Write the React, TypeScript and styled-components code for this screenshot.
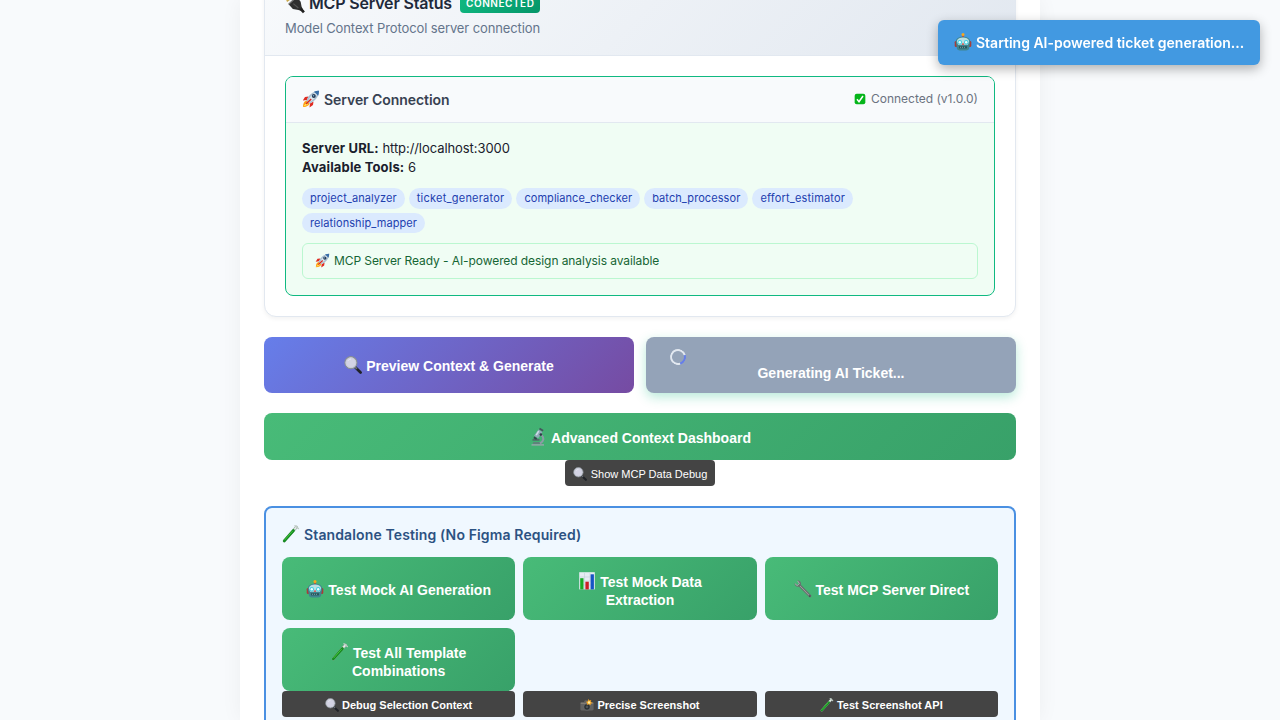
import React from "react";
import styled, { createGlobalStyle, css } from "styled-components";

const GlobalStyle = createGlobalStyle`
  * { box-sizing: border-box; }
  body {
    margin: 0;
    background: #f8fafc;
    color: #1a202c;
    font-family: Inter, "Liberation Sans", sans-serif;
    overflow: hidden;
  }
`;

const Page = styled.main`
  width: 800px;
  height: 720px;
  margin: 0 auto;
  padding: 0 24px;
  overflow: hidden;
  background: #ffffff;
  box-shadow: 0 0 20px rgba(0, 0, 0, 0.05);
`;

const Card = styled.section`
  margin-top: -30px;
  height: 347px;
  border: 1px solid #e2e8f0;
  border-radius: 12px;
  overflow: hidden;
  background: #fff;
  box-shadow: 0 2px 4px rgba(0, 0, 0, 0.05);
`;

const CardHeader = styled.header`
  height: 85px;
  padding: 19px 20px;
  background: linear-gradient(135deg, #f8fafc 0%, #e2e8f0 100%);
  border-bottom: 1px solid #e2e8f0;
`;

const CardTitle = styled.h3`
  display: flex;
  align-items: center;
  height: 26px;
  margin: 0;
  font-size: 16px;
  font-weight: 600;
  letter-spacing: -0.17px;
  color: #1e293b;

  svg { margin-top: 0; }
`;

const StatusBadge = styled.span`
  height: 18px;
  margin: 2px 0 0 8px;
  padding: 0 5.5px 0 6px;
  border-radius: 4px;
  background: linear-gradient(135deg, #10b981 0%, #059669 100%);
  color: #fff;
  font-size: 10px;
  line-height: 17px;
  font-weight: 600;
  letter-spacing: 0.55px;
`;

const CardSubtitle = styled.p`
  margin: 2px 0 0;
  font-size: 13px;
  line-height: 20px;
  letter-spacing: -0.11px;
  color: #64748b;
`;

const CardBody = styled.div`
  padding: 20px;
`;

const Connection = styled.div`
  height: 220px;
  border: 1px solid #10b981;
  border-radius: 8px;
  overflow: hidden;
  background: #f0fdf4;
`;

const ConnectionHeader = styled.div`
  display: flex;
  justify-content: space-between;
  height: 46px;
  padding: 0 16px;
  background: #f8fafc;
  border-bottom: 1px solid #e2e8f0;
`;

const ConnectionTitle = styled.h4`
  margin: 0;
  font-size: 14px;
  line-height: 46px;
  font-weight: 600;
  letter-spacing: -0.06px;
  color: #374151;
`;

const ConnectionState = styled.span`
  font-size: 12px;
  line-height: 44px;
  color: #6b7280;
`;

const ConnectionBody = styled.div`
  padding: 16px;
  font-size: 13px;
  line-height: 19.5px;
`;

const Detail = styled.div`
  height: 19px;
  line-height: 19px;
  letter-spacing: -0.07px;
`;

const DetailLabel = styled.strong`
  font-weight: 700;
  letter-spacing: 0.15px;
`;

const ToolList = styled.div`
  display: flex;
  flex-wrap: wrap;
  gap: 4px;
  margin: 11px 0 10px;
`;

const Tool = styled.span<{ $tracking: number }>`
  height: 20.5px;
  padding: 2px 8px;
  border-radius: 12px;
  background: #dbeafe;
  color: #1e40af;
  font-size: 11px;
  line-height: 16px;
  letter-spacing: ${(p) => p.$tracking}px;
`;

const Ready = styled.div`
  height: 36px;
  padding: 8px 12px;
  border: 1px solid #bbf7d0;
  border-radius: 6px;
  color: #166534;
  font-size: 12px;
  line-height: 18px;
  letter-spacing: -0.08px;
`;

const ActionRow = styled.div`
  display: grid;
  grid-template-columns: 1fr 1fr;
  gap: 12px;
  margin: 20px 0;
`;

const buttonText = css`
  border: 0;
  color: #fff;
  font-family: "Liberation Sans", Arial, sans-serif;
  text-align: center;
`;

const ActionButton = styled.button<{ $tone: "violet" | "green" | "busy"; $height: number; $top?: number }>`
  ${buttonText}
  width: 100%;
  height: ${(p) => p.$height}px;
  padding: ${(p) => p.$top ?? 2}px 24px 0;
  border-radius: 8px;
  font-size: 14px;
  line-height: 18px;
  font-weight: 700;
  background: ${(p) =>
    p.$tone === "violet"
      ? "linear-gradient(135deg, #667eea 0%, #764ba2 100%)"
      : p.$tone === "green"
        ? "linear-gradient(135deg, #48bb78 0%, #38a169 100%)"
        : "#94a3b8"};
  ${(p) => p.$tone === "busy" && "box-shadow: 0 4px 12px rgba(16, 185, 129, 0.3);"}
`;

const Spinner = styled.span`
  display: block;
  width: 16px;
  height: 16px;
  border: 2px solid #e2e8f0;
  border-top-color: #667eea;
  border-radius: 50%;
  transform: rotate(118deg);
`;

const BusyLabel = styled.span`
  display: block;
  line-height: 16px;
`;

const DebugButton = styled.button<{ $strong?: boolean }>`
  ${buttonText}
  height: 26px;
  padding: 2px 8px 0;
  border-radius: 4px;
  background: #444;
  font-size: 11px;
  line-height: 14px;
  font-weight: ${(p) => (p.$strong ? 700 : 400)};
`;

const Centered = styled.div`
  display: flex;
  justify-content: center;
`;

const Testing = styled.section`
  height: 260px;
  margin-top: 20px;
  padding: 16px;
  border: 2px solid #4a90e2;
  border-radius: 8px;
  background: #f0f8ff;
`;

const TestingTitle = styled.h4`
  height: 33px;
  margin: 0;
  font-size: 14px;
  line-height: 22px;
  font-weight: 600;
  letter-spacing: 0.13px;
  color: #2c5282;
`;

const TripleGrid = styled.div`
  display: grid;
  grid-template-columns: repeat(3, 1fr);
  gap: 8px;
`;

const Toast = styled.div`
  position: fixed;
  top: 20px;
  right: 20px;
  width: 322px;
  height: 45px;
  padding: 0 16px;
  border-radius: 6px;
  background: #4299e1;
  color: #fff;
  font-size: 14px;
  line-height: 46px;
  font-weight: 600;
  white-space: nowrap;
  box-shadow: 0 4px 12px rgba(0, 0, 0, 0.3);
`;

const Glyph = styled.svg<{ $size: number; $drop: number; $gap: number }>`
  display: inline-block;
  width: ${(p) => p.$size}px;
  height: ${(p) => p.$size}px;
  margin: -6px ${(p) => p.$gap}px 0 0;
  vertical-align: ${(p) => -p.$drop}px;
  overflow: visible;
  flex: none;
`;

type IconName =
  | "plug" | "rocket" | "check" | "robot" | "lens" | "microscope"
  | "tube" | "chart" | "wrench" | "camera";

const drawings: Record<IconName, React.ReactNode> = {
  plug: (
    <>
      <path d="M1.500 7.500l4-3M6 2l3.500-2" stroke="#c9a94e" strokeWidth="1.600" />
      <path d="M3.200 10.200L10.500 3.500l3.600 4.300.8 4.300 2.400 4.900-5.200-1.800-5-.7z" fill="#303030" />
      <path d="M3.200 10.200L10.500 3.500" stroke="#777" strokeWidth="1.200" />
      <path d="M7.500 9.500l4.500 4" stroke="#565656" strokeWidth="1" />
      <path d="M14 14l3 3.400" stroke="#202020" strokeWidth="2.400" />
    </>
  ),
  rocket: (
    <>
      <path d="M1 17c0-4 1.500-6.500 4.500-6.500l2.200 2.300C7.500 15.500 5 17 1 17z" fill="#ff9d16" />
      <path d="M1.200 16.800l3.500-4.300 1.700 1.700z" fill="#ffed5c" />
      <path d="M6.500 6.500L3 7 .8 10.600l4-.6zM11.500 11.500l-.5 3.400-3.500 2.500.5-4z" fill="#df2b22" />
      <path d="M4.500 11C6 5.500 10.500 1.200 17 .8c.2 6.200-4.500 11-9.800 12.700z" fill="#a9bfd2" />
      <path d="M5.600 12C8 6 11.500 3 16.900.8 15 6 11.500 10 6.500 12.800z" fill="#dae6ed" />
      <path d="M12 1.800C13.500 1 15.200.8 17 .8c0 1.800-.2 3.400-.9 4.900z" fill="#386da8" />
      <circle cx="11.800" cy="6.100" r="2" fill="#243752" />
      <circle cx="11.500" cy="5.800" r=".8" fill="#7aafd3" />
      <path d="M4 14l5.200-5" stroke="#d92820" strokeWidth="1.500" />
    </>
  ),
  check: (
    <>
      <rect x="1" y="1" width="16" height="16" rx="3" fill="#05b51a" />
      <path d="M4.500 9.500l3 3.500L13.500 4.500" stroke="#fff" strokeWidth="2.300" fill="none" />
    </>
  ),
  robot: (
    <>
      <path d="M9 5V2" stroke="#d34537" strokeWidth="1.800" />
      <circle cx="9" cy="1.500" r="1.500" fill="#f7a91c" />
      <rect x=".7" y="8" width="3" height="6" rx="1.300" fill="#a83c38" />
      <rect x="14.300" y="8" width="3" height="6" rx="1.300" fill="#a83c38" />
      <path d="M1.800 9C1.800 5.200 5 3.800 9 3.800s7.200 1.400 7.200 5.200c0 2-.8 3-.9 5.500-.1 2.200-1.500 3-3.300 3H6c-1.800 0-3.200-.8-3.300-3C2.600 12 1.800 11 1.800 9z" fill="#3f858f" />
      <path d="M2.800 8C3.800 5 6 4.400 9 4.400s5.200.6 6.200 3.600L14 11.800H4z" fill="#b9dfe3" />
      <circle cx="5.800" cy="9.200" r="2.200" fill="#40cfe0" />
      <circle cx="12.200" cy="9.200" r="2.200" fill="#40cfe0" />
      <circle cx="5.800" cy="9.200" r="1.200" fill="#edffff" />
      <circle cx="12.200" cy="9.200" r="1.200" fill="#edffff" />
      <path d="M9 9.500l1.200 2.300H7.800z" fill="#dc3e39" />
      <path d="M5 14.300h8" stroke="#27565d" strokeWidth="2.200" />
      <path d="M6 14.300h6" stroke="#79a5aa" strokeWidth="1" strokeDasharray="1 1" />
    </>
  ),
  lens: (
    <>
      <path d="M11.500 11.500l5.100 5" stroke="#202328" strokeWidth="2.700" strokeLinecap="round" />
      <path d="M10.700 10.700l2.200 2.200" stroke="#686d74" strokeWidth="1.800" />
      <circle cx="6.900" cy="6.700" r="6" fill="#cdd0df" stroke="#888e94" strokeWidth="1.200" />
      <circle cx="6.900" cy="6.700" r="5" fill="#d3d3e4" stroke="#c5cad2" strokeWidth=".7" />
      <path d="M4 4.800c.8-1.100 1.800-1.700 3-1.700" stroke="#e8e9f2" fill="none" />
    </>
  ),
  microscope: (
    <>
      <path d="M2.500 16.900h12.500" stroke="#9aa5ac" strokeWidth="1.400" />
      <path d="M4 15h9" stroke="#68757e" strokeWidth="1.500" />
      <path d="M11.500 6.500c4.500 3 3.200 7-.5 9" stroke="#8c9ca6" strokeWidth="2" fill="none" />
      <path d="M3.500 11.900h7" stroke="#505c66" strokeWidth="1.400" />
      <path d="M9.500 1.500l4 2.500-4.300 6.300L5 7.800z" fill="#91a9b8" />
      <path d="M10.500.5l3.600 2.300" stroke="#46535d" strokeWidth="1.700" />
      <path d="M5.300 8.600l2.900 1.700-1 1.500-2.800-1.500z" fill="#36434d" />
      <path d="M9.700 3.200L7.200 7.200" stroke="#d0dfe8" strokeWidth="1.500" />
      <circle cx="11.800" cy="6.600" r="1.300" fill="#303d46" />
    </>
  ),
  tube: (
    <>
      <path d="M14.500 2L2.200 16" stroke="#9eada4" strokeWidth="2.900" strokeLinecap="round" />
      <path d="M14.500 2L2.400 15.700" stroke="#e5eee9" strokeWidth="1.700" strokeLinecap="round" />
      <path d="M11.500 5.500L2.300 15.900" stroke="#128c20" strokeWidth="2.700" strokeLinecap="round" />
      <path d="M10.800 5.800L2.500 15.200" stroke="#4dcb3e" strokeWidth=".9" />
      <path d="M13 .7l3.400 2.800" stroke="#bdc8c3" strokeWidth="1.400" strokeLinecap="round" />
    </>
  ),
  chart: (
    <>
      <path d="M1.200.2h15.600v17.200H1.200z" fill="#e6ecf3" />
      <path d="M1.500 5h15M1.500 9h15M1.500 13h15M6.500 1v16M12 1v16" stroke="#bdcad6" strokeWidth=".5" />
      <path d="M2.200 6.200h3.300v11.200H2.200z" fill="#18ac25" />
      <path d="M7.400 9.700h3.400v7.700H7.400z" fill="#cb1f25" />
      <path d="M12.600 2.300h3.300v15.100h-3.300z" fill="#1554c4" />
    </>
  ),
  wrench: (
    <>
      <path d="M3.300.5C5.800.2 7.700 2.500 6.900 4.800l10.300 10.500c.8 1-.9 2.700-1.900 1.900L4.900 6.800C2.600 7.500.2 5.400.6 3.100l2.700 2 1.600-1.600z" fill="#68716f" />
      <path d="M6 6l9.400 9.600" stroke="#a0a5a4" strokeWidth=".9" />
      <path d="M.9 3.600l2.300 2 2.200-2-1.800-2.700" stroke="#c0c6c9" strokeWidth=".7" fill="none" />
      <circle cx="15.800" cy="16" r=".7" fill="#333d43" />
    </>
  ),
  camera: (
    <>
      <path d="M5 5l1.300-2h5.500l1.200 2h3c1 0 1.500.6 1.500 1.500v8c0 1-.6 1.500-1.500 1.500H2c-1 0-1.500-.5-1.500-1.500v-8C.5 5.500 1 5 2 5z" fill="#626262" />
      <path d="M1 7h16" stroke="#827c73" strokeWidth="1.400" />
      <circle cx="9" cy="11.500" r="4.200" fill="#292e31" stroke="#777b7d" strokeWidth=".8" />
      <circle cx="9" cy="11.500" r="1.800" fill="#4d5359" />
      <path d="M11 1l1 2.300 2.500-.7-.7 2.500 2.500 1-2.500 1.200-.2 2.100-2.500-1.300-2.500.8.8-2.400-2.200-1.500 3-.8z" fill="#f4a21f" />
      <circle cx="11.700" cy="5.700" r="1.600" fill="#fff0a0" />
    </>
  ),
};

function Icon({ name, size = 18, drop = 3, gap = 4 }: { name: IconName; size?: number; drop?: number; gap?: number }) {
  return (
    <Glyph viewBox="0 0 18 18" fill="none" aria-hidden="true" $size={size} $drop={drop} $gap={gap}>
      {drawings[name]}
    </Glyph>
  );
}

const tools = [
  { name: "project_analyzer", tracking: 0.08 },
  { name: "ticket_generator", tracking: 0.23 },
  { name: "compliance_checker", tracking: 0.05 },
  { name: "batch_processor", tracking: 0.08 },
  { name: "effort_estimator", tracking: 0.18 },
  { name: "relationship_mapper", tracking: 0.08 },
];

const tests: { icon: IconName; label: React.ReactNode; top?: number }[] = [
  { icon: "robot", label: "Test Mock AI Generation" },
  { icon: "chart", label: <>Test Mock Data<br />Extraction</>, top: 4 },
  { icon: "wrench", label: "Test MCP Server Direct" },
  { icon: "tube", label: <>Test All Template<br />Combinations</>, top: 4 },
];

const debugTools: { icon: IconName; label: string }[] = [
  { icon: "lens", label: "Debug Selection Context" },
  { icon: "camera", label: "Precise Screenshot" },
  { icon: "tube", label: "Test Screenshot API" },
];

export default function App() {
  return (
    <>
      <GlobalStyle />
      <Page>
        <Card>
          <CardHeader>
            <CardTitle>
              <Icon name="plug" size={20} />MCP Server Status
              <StatusBadge>CONNECTED</StatusBadge>
            </CardTitle>
            <CardSubtitle>Model Context Protocol server connection</CardSubtitle>
          </CardHeader>
          <CardBody>
            <Connection>
              <ConnectionHeader>
                <ConnectionTitle><Icon name="rocket" />Server Connection</ConnectionTitle>
                <ConnectionState><Icon name="check" size={12} drop={1.5} gap={5} />Connected (v1.0.0)</ConnectionState>
              </ConnectionHeader>
              <ConnectionBody>
                <Detail><DetailLabel>Server URL:</DetailLabel> http://localhost:3000</Detail>
                <Detail><DetailLabel>Available Tools:</DetailLabel> 6</Detail>
                <ToolList>
                  {tools.map((tool) => <Tool key={tool.name} $tracking={tool.tracking}>{tool.name}</Tool>)}
                </ToolList>
                <Ready><Icon name="rocket" size={15} />MCP Server Ready - AI-powered design analysis available</Ready>
              </ConnectionBody>
            </Connection>
          </CardBody>
        </Card>
        <ActionRow>
          <ActionButton $tone="violet" $height={56}><Icon name="lens" />Preview Context &amp; Generate</ActionButton>
          <ActionButton $tone="busy" $height={56} $top={0}>
            <Spinner />
            <BusyLabel>Generating AI Ticket...</BusyLabel>
          </ActionButton>
        </ActionRow>
        <ActionButton $tone="green" $height={47}><Icon name="microscope" />Advanced Context Dashboard</ActionButton>
        <Centered>
          <DebugButton><Icon name="lens" size={14} />Show MCP Data Debug</DebugButton>
        </Centered>
        <Testing>
          <TestingTitle><Icon name="tube" />Standalone Testing (No Figma Required)</TestingTitle>
          <TripleGrid>
            {tests.map((test) => (
              <ActionButton key={test.icon} $tone="green" $height={63} $top={test.top}>
                <Icon name={test.icon} />{test.label}
              </ActionButton>
            ))}
          </TripleGrid>
          <TripleGrid>
            {debugTools.map((tool) => (
              <DebugButton key={tool.icon} $strong>
                <Icon name={tool.icon} size={14} gap={3} />{tool.label}
              </DebugButton>
            ))}
          </TripleGrid>
        </Testing>
      </Page>
      <Toast role="status"><Icon name="robot" />Starting AI-powered ticket generation...</Toast>
    </>
  );
}
